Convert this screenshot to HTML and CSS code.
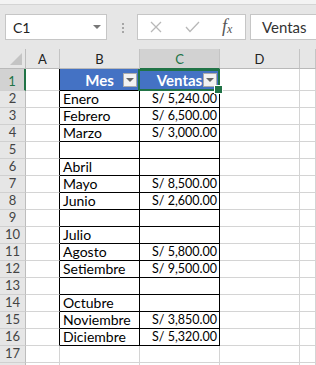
FILE: index.html
```html
<!DOCTYPE html>
<html>
<head>
	<meta charset="utf-8">
	<title>Ventas</title>
	<link rel="stylesheet" href="styles.css">
</head>
<body>
	<div id="ventana">
		<div id="cinta"></div>
		<div id="barra-formulas">
			<div id="cuadro-nombre"><span>C1</span><i class="flecha"></i></div>
			<div id="separador"><b></b><b></b><b></b></div>
			<div id="botones">
				<svg class="cancelar" width="12" height="12" viewBox="0 0 12 12"><path d="M1 1 L11 11 M11 1 L1 11" /></svg>
				<svg class="aceptar" width="15" height="12" viewBox="0 0 15 12"><path d="M1 6 L5 10.5 L14 1" /></svg>
				<span class="fx">f<sub>x</sub></span>
			</div>
			<div id="formula">Ventas</div>
		</div>

		<div id="hoja">
			<div class="esquina"><svg width="25" height="19" viewBox="0 0 25 19"><polygon points="22,4 22,16 10,16" /></svg></div>
			<div class="col">A</div>
			<div class="col">B</div>
			<div class="col sel">C</div>
			<div class="col">D</div>
			<div class="col"></div>

			<div class="fila sel">1</div>
			<div class="celda borde"></div>
			<div class="celda enc">Mes<span class="filtro"></span></div>
			<div class="celda enc activa">Ventas<span class="filtro"></span><span class="seleccion"></span></div>
			<div class="celda"></div>
			<div class="celda"></div>

			<div class="fila">2</div>
			<div class="celda borde"></div>
			<div class="celda t">Enero</div>
			<div class="celda t num">S/ 5,240.00</div>
			<div class="celda"></div>
			<div class="celda"></div>

			<div class="fila">3</div>
			<div class="celda borde"></div>
			<div class="celda t">Febrero</div>
			<div class="celda t num">S/ 6,500.00</div>
			<div class="celda"></div>
			<div class="celda"></div>

			<div class="fila">4</div>
			<div class="celda borde"></div>
			<div class="celda t">Marzo</div>
			<div class="celda t num">S/ 3,000.00</div>
			<div class="celda"></div>
			<div class="celda"></div>

			<div class="fila">5</div>
			<div class="celda borde"></div>
			<div class="celda t"></div>
			<div class="celda t num"></div>
			<div class="celda"></div>
			<div class="celda"></div>

			<div class="fila">6</div>
			<div class="celda borde"></div>
			<div class="celda t">Abril</div>
			<div class="celda t num"></div>
			<div class="celda"></div>
			<div class="celda"></div>

			<div class="fila">7</div>
			<div class="celda borde"></div>
			<div class="celda t">Mayo</div>
			<div class="celda t num">S/ 8,500.00</div>
			<div class="celda"></div>
			<div class="celda"></div>

			<div class="fila">8</div>
			<div class="celda borde"></div>
			<div class="celda t">Junio</div>
			<div class="celda t num">S/ 2,600.00</div>
			<div class="celda"></div>
			<div class="celda"></div>

			<div class="fila">9</div>
			<div class="celda borde"></div>
			<div class="celda t"></div>
			<div class="celda t num"></div>
			<div class="celda"></div>
			<div class="celda"></div>

			<div class="fila">10</div>
			<div class="celda borde"></div>
			<div class="celda t">Julio</div>
			<div class="celda t num"></div>
			<div class="celda"></div>
			<div class="celda"></div>

			<div class="fila">11</div>
			<div class="celda borde"></div>
			<div class="celda t">Agosto</div>
			<div class="celda t num">S/ 5,800.00</div>
			<div class="celda"></div>
			<div class="celda"></div>

			<div class="fila">12</div>
			<div class="celda borde"></div>
			<div class="celda t">Setiembre</div>
			<div class="celda t num">S/ 9,500.00</div>
			<div class="celda"></div>
			<div class="celda"></div>

			<div class="fila">13</div>
			<div class="celda borde"></div>
			<div class="celda t"></div>
			<div class="celda t num"></div>
			<div class="celda"></div>
			<div class="celda"></div>

			<div class="fila">14</div>
			<div class="celda borde"></div>
			<div class="celda t">Octubre</div>
			<div class="celda t num"></div>
			<div class="celda"></div>
			<div class="celda"></div>

			<div class="fila">15</div>
			<div class="celda borde"></div>
			<div class="celda t">Noviembre</div>
			<div class="celda t num">S/ 3,850.00</div>
			<div class="celda"></div>
			<div class="celda"></div>

			<div class="fila">16</div>
			<div class="celda borde"></div>
			<div class="celda t">Diciembre</div>
			<div class="celda t num">S/ 5,320.00</div>
			<div class="celda"></div>
			<div class="celda"></div>

			<div class="fila">17</div>
			<div class="celda"></div>
			<div class="celda"></div>
			<div class="celda"></div>
			<div class="celda"></div>
			<div class="celda"></div>

			<div class="fila"></div>
			<div class="celda"></div>
			<div class="celda"></div>
			<div class="celda"></div>
			<div class="celda"></div>
			<div class="celda"></div>
		</div>
	</div>
</body>
</html>
```

FILE: styles.css
```css
* {
	box-sizing: border-box;
}

body {
	margin: 0;
	background-color: #fff;
	font-family: Lato, "Liberation Sans", sans-serif;
}

#ventana {
	width: 316px;
	height: 365px;
	overflow: hidden;
}

/* barra de formulas */
#cinta {
	height: 5px;
	background-color: #f3f3f3;
	border-bottom: 1px solid #d4d4d4;
}

#barra-formulas {
	display: flex;
	align-items: flex-start;
	height: 44px;
	padding-top: 9px;
	background-color: #e6e6e6;
}

#cuadro-nombre {
	display: flex;
	align-items: center;
	justify-content: space-between;
	margin-left: 5px;
	width: 102px;
	height: 26px;
	padding: 0 5px 0 7px;
	background-color: #fff;
	border: 1px solid #c6c6c6;
	font-size: 14px;
	color: #222;
}

.flecha {
	width: 0;
	height: 0;
	border-left: 4px solid transparent;
	border-right: 4px solid transparent;
	border-top: 4px solid #777;
}

#separador {
	display: flex;
	flex-direction: column;
	gap: 2px;
	margin-left: 15px;
	padding-top: 9px;
}

#separador b {
	width: 2px;
	height: 2px;
	background-color: #a6a6a6;
}

#botones {
	display: flex;
	align-items: center;
	margin-left: 13px;
	width: 109px;
	height: 26px;
	background-color: #fff;
	border: 1px solid #c6c6c6;
}

#botones svg path {
	fill: none;
	stroke: #b8b8b8;
	stroke-width: 1.3;
}

.cancelar {
	margin-left: 12px;
}

.aceptar {
	margin-left: 23px;
}

.fx {
	margin-left: 22px;
	font-family: "Liberation Serif", serif;
	font-style: italic;
	font-size: 18px;
	line-height: 18px;
	color: #555;
}

.fx sub {
	font-size: 12px;
	vertical-align: -1px;
}

#formula {
	display: flex;
	align-items: center;
	flex-grow: 1;
	margin-left: 4px;
	height: 26px;
	padding-left: 11px;
	background-color: #fff;
	border: 1px solid #c6c6c6;
	border-right: none;
	font-size: 15px;
	color: #333;
}

/* hoja */
#hoja {
	display: grid;
	grid-template-columns: 26px 34px 80px 80px 80px 1fr;
	grid-template-rows: 20px 22px repeat(17, 17px);
}

.esquina {
	background-color: #e6e6e6;
	border-right: 1px solid #bdbdbd;
	border-bottom: 1px solid #b9b9b9;
}

.esquina svg {
	display: block;
}

.esquina polygon {
	fill: #c4c4c4;
}

.col {
	display: flex;
	align-items: center;
	justify-content: center;
	background-color: #e6e6e6;
	border-right: 1px solid #c4c4c4;
	border-bottom: 1px solid #b9b9b9;
	font-size: 13px;
	color: #222;
}

.col.sel {
	background-color: #d2d2d2;
	color: #217346;
	border-bottom-color: #217346;
}

.fila {
	display: flex;
	align-items: flex-end;
	justify-content: center;
	padding-bottom: 1px;
	background-color: #e6e6e6;
	border-right: 1px solid #bdbdbd;
	border-bottom: 1px solid #d0d0d0;
	font-size: 13px;
	line-height: 16px;
	color: #444;
}

.fila.sel {
	background-color: #d2d2d2;
	color: #217346;
	border-right: 2px solid #217346;
}

.celda {
	display: flex;
	align-items: flex-end;
	padding: 0 2px 0 3px;
	border-right: 1px solid #d4d4d4;
	border-bottom: 1px solid #d4d4d4;
	font-size: 14px;
	line-height: 16px;
	color: #000;
	white-space: nowrap;
}

.celda.borde {
	border-right-color: #000;
}

.celda.t {
	border-right-color: #000;
	border-bottom-color: #000;
}

.celda.num {
	justify-content: flex-end;
	font-size: 12.5px;
}

.celda.enc {
	position: relative;
	justify-content: center;
	padding: 0 0 2px 0;
	background-color: #4472c4;
	border-right-color: #fff;
	border-bottom-color: #000;
	color: #fff;
	font-size: 15px;
	font-weight: bold;
}

.filtro {
	position: absolute;
	right: 2px;
	top: 4px;
	display: flex;
	align-items: center;
	justify-content: center;
	width: 14px;
	height: 14px;
	background-color: #f2f2f2;
	border: 1px solid #ababab;
}

.filtro::after {
	content: "";
	border-left: 4px solid transparent;
	border-right: 4px solid transparent;
	border-top: 4px solid #666;
}

.seleccion {
	position: absolute;
	left: -2px;
	top: 0;
	width: 82px;
	height: 22px;
	border: 2px solid #217346;
}

.seleccion::after {
	content: "";
	position: absolute;
	right: -5px;
	bottom: -5px;
	width: 7px;
	height: 7px;
	background-color: #217346;
	border: 1px solid #fff;
}
```
